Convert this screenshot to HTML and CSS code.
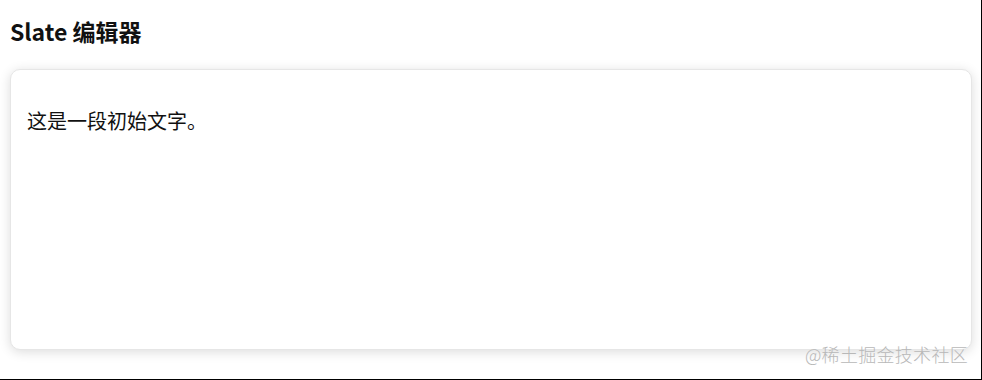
FILE: index.html
```html
<!DOCTYPE html>
<html lang="zh-CN">
<head>
<meta charset="utf-8">
<title>Slate 编辑器</title>
<link rel="stylesheet" href="styles.css">
</head>
<body>
<div class="page">
  <h1 class="title">Slate 编辑器</h1>
  <div class="editor">
    <p class="para">这是一段初始文字。</p>
  </div>
  <div class="watermark">@稀土掘金技术社区</div>
</div>
</body>
</html>
```
FILE: styles.css
```css
html, body {
  margin: 0;
  padding: 0;
  background: #fff;
}
body {
  width: 982px;
  height: 380px;
  overflow: hidden;
  font-family: "Noto Sans CJK SC", "Noto Sans", sans-serif;
  color: #000;
}
.page {
  position: relative;
  box-sizing: border-box;
  width: 982px;
  height: 380px;
  border-right: 1px solid #000;
  border-bottom: 1px solid #000;
  padding: 15px 9px 0 10px;
  display: flex;
  flex-direction: column;
}
.title {
  margin: 0;
  font-size: 23px;
  line-height: 32px;
  font-weight: 700;
  color: #111;
}
.editor {
  margin-top: 22px;
  height: 281px;
  box-sizing: border-box;
  border: 1px solid #e6e6e6;
  border-radius: 10px;
  box-shadow: 0 2px 12px rgba(0, 0, 0, 0.14);
  padding: 36px 16px 0 16px;
  background: #fff;
}
.para {
  margin: 0;
  font-size: 20px;
  line-height: 30px;
  color: #111;
}
.watermark {
  position: absolute;
  right: 13px;
  bottom: 14px;
  font-size: 18px;
  line-height: 22px;
  letter-spacing: 0.3px;
  color: #b8b8b8;
  font-weight: 300;
}
```
